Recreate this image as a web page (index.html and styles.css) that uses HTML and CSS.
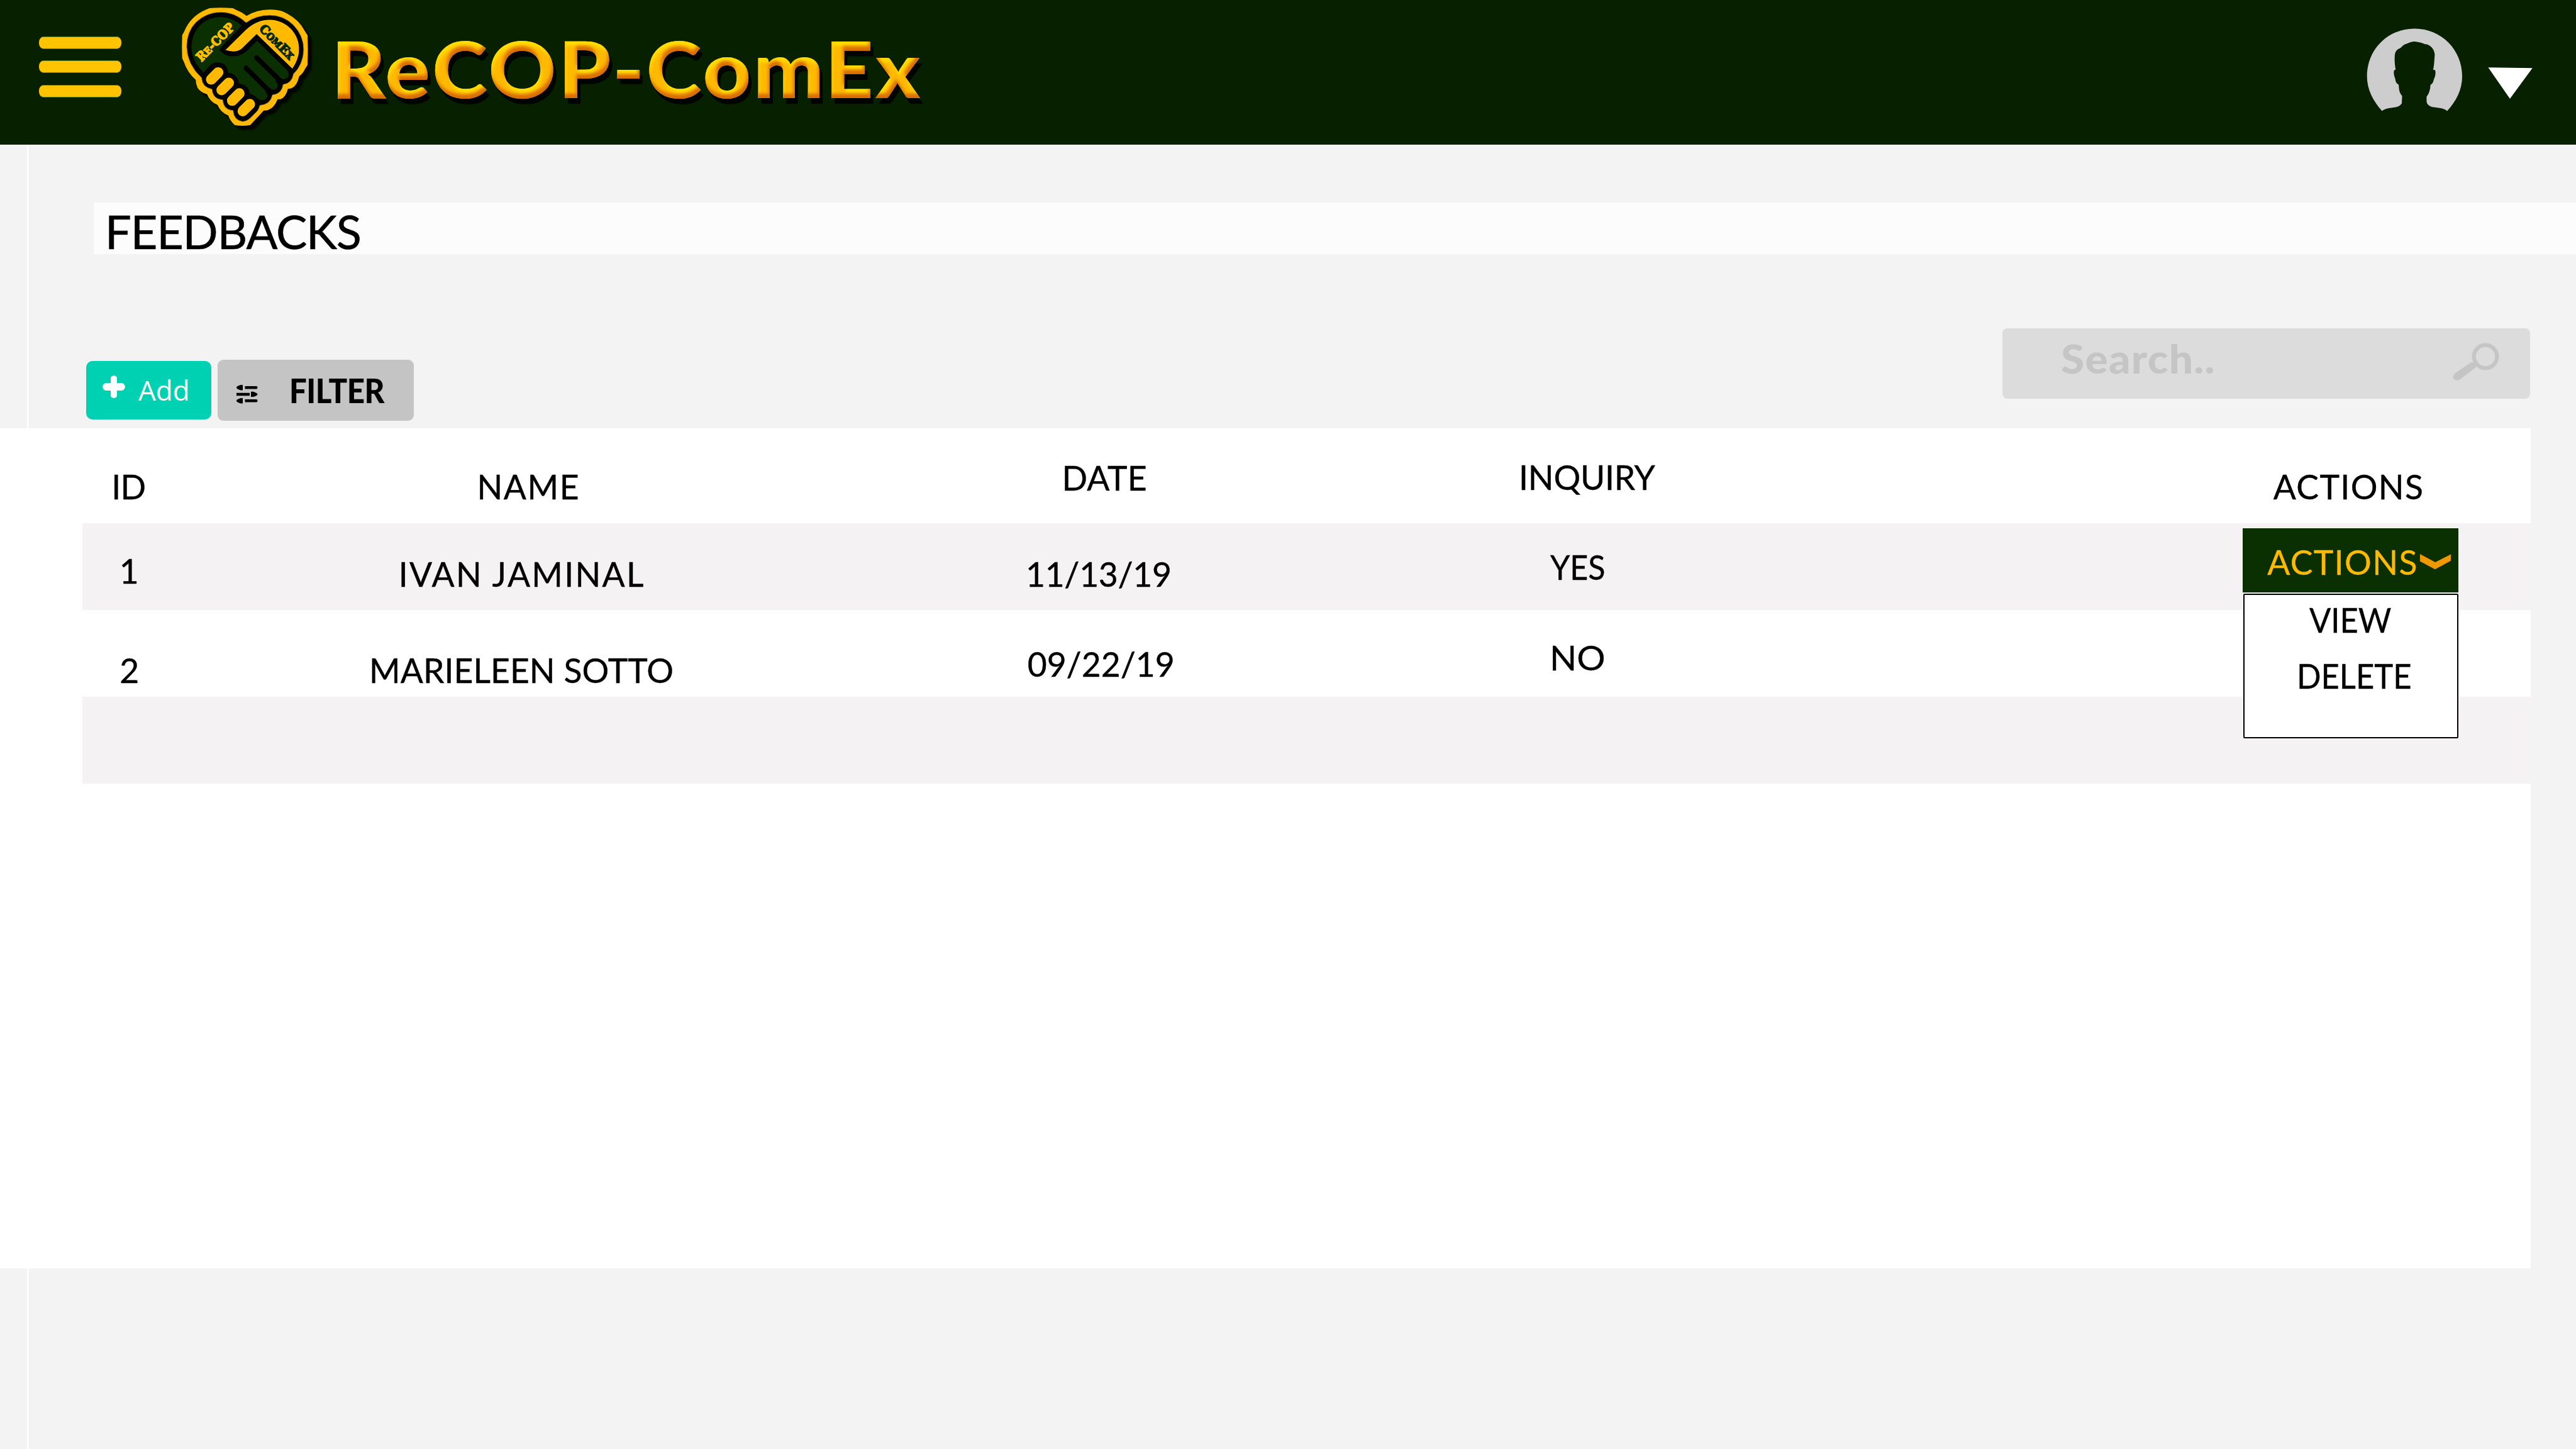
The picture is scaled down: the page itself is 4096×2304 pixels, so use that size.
FILE: index.html
```html
<!DOCTYPE html>
<html lang="en">
<head>
<meta charset="utf-8">
<title>ReCOP-ComEx</title>
<link rel="stylesheet" href="styles.css">
</head>
<body>
<header class="topbar">
  <div class="burger"><span class="bar"></span><span class="bar"></span><span class="bar"></span></div>
  <svg class="logo" viewBox="0 0 1140 1020">
    <defs>
      <filter id="soft" x="-10%" y="-10%" width="125%" height="125%"><feGaussianBlur stdDeviation="8"/></filter>
      <filter id="bevel" x="-5%" y="-10%" width="110%" height="130%" color-interpolation-filters="sRGB">
        <feComponentTransfer in="SourceAlpha" result="inv"><feFuncA type="table" tableValues="1 0"/></feComponentTransfer>
        <feGaussianBlur in="inv" stdDeviation="2.5" result="soft"/>
        <feOffset in="soft" dx="-2" dy="-7" result="low"/>
        <feFlood flood-color="#d96c00"/>
        <feComposite in2="low" operator="in"/>
        <feComposite in2="SourceAlpha" operator="in" result="shade"/>
        <feOffset in="soft" dx="2" dy="7" result="high"/>
        <feFlood flood-color="#ffdc00"/>
        <feComposite in2="high" operator="in"/>
        <feComposite in2="SourceAlpha" operator="in" result="shine"/>
        <feOffset in="SourceAlpha" dx="5" dy="9" result="drop"/>
        <feFlood flood-color="#000400"/>
        <feComposite in2="drop" operator="in" result="cast"/>
        <feMerge><feMergeNode in="cast"/><feMergeNode in="SourceGraphic"/><feMergeNode in="shine"/><feMergeNode in="shade"/></feMerge>
      </filter>
      <path id="shell" d="M300 61Q385 54 475 61L495 72Q540 90 577 118Q655 70 750 71Q820 72 852 88L880 102Q970 150 1010 230L1031 262Q1037 370 1031 485L1012 515Q1000 545 968 570Q955 640 910 659L885 662Q870 725 830 739L808 741Q780 810 730 823L705 824L605 932Q545 943 488 932Q455 900 440 860Q385 840 360 782Q305 760 282 702Q235 690 212 655Q198 625 198 595Q135 540 108 457L97 435Q93 350 97 262L112 235Q160 120 275 72Z"/>
    </defs>
    <use href="#shell" transform="translate(30 30)" fill="#000" filter="url(#soft)" opacity=".9"/>
    <use href="#shell" fill="#ffb900"/>
    <path fill="#000" stroke="#b79545" stroke-width="4" d="M385 90Q490 90 574 168Q650 113 750 113Q850 113 925 185Q1003 265 1003 370Q1000 480 927 552Q915 622 850 630Q840 700 770 708Q755 780 676 786Q670 815 655 830L600 885Q575 905 548 907Q480 895 476 824Q405 820 398 745Q325 740 318 665Q245 650 241 580Q133 480 130 348Q130 235 200 165Q280 90 385 90Z"/>
    <path fill="#0a2f00" d="M385 127Q470 130 541 190L372 370Q415 420 475 420Q535 418 580 378L655 303L880 525Q900 560 880 580Q855 600 822 582L790 600Q820 630 805 655Q780 680 745 655L715 680Q740 705 730 728Q700 760 665 738L642 718Q625 706 602 700Q592 630 520 622Q508 550 440 543Q435 470 362 465Q325 465 300 492L257 541Q165 450 166 350Q170 240 245 175Q305 127 385 127Z"/>
    <path fill="none" stroke="#000" stroke-width="36" stroke-linecap="round" d="M652 430L832 606M573 507L752 684"/>
    <path fill="#ffb900" stroke="#ffc60a" stroke-width="5" d="M424 372L570 228Q650 150 750 150Q840 152 903 215Q967 280 965 375Q963 440 918 507L652 250L545 355Q500 395 424 372Z"/>
    <path fill="none" stroke="#ffc400" stroke-width="78" stroke-linecap="round" d="M365 540L313 592M444 618L391 671M523 697L470 750M601 776L549 828"/>
    <path fill="none" stroke="#ffb900" stroke-width="68" stroke-linecap="round" d="M365 540L313 592M444 618L391 671M523 697L470 750M601 776L549 828"/>
    <text class="badge badge-gold" transform="translate(240 463) rotate(-45)" textLength="358" lengthAdjust="spacingAndGlyphs"><tspan font-size="94">R</tspan><tspan font-size="72">E</tspan><tspan font-size="94">-COP</tspan></text>
    <text class="badge badge-green" transform="translate(666 219) rotate(45)" textLength="326" lengthAdjust="spacingAndGlyphs"><tspan font-size="92">C</tspan><tspan font-size="70">OM</tspan><tspan font-size="92">E</tspan><tspan font-size="70">X</tspan></text>
  </svg>
  <h1 class="brand">ReCOP-ComEx</h1>
  <svg class="account" viewBox="0 0 1568 1020" preserveAspectRatio="none">
    <path fill="#cdcdcd" d="M309 705C250 630 211 545 211 446C211 250 345 91 520 91C695 91 829 250 829 446C829 545 792 630 731 705C715 685 670 681 632 675C608 665 598 650 598 632L598 598C615 575 621 545 623 512L637 497C644 480 645 465 652 450C657 430 657 410 652 400L640 398C648 370 648 320 651 285C648 245 625 210 585 206C560 195 540 190 518 188C490 190 480 203 460 207C440 215 435 235 420 240C400 250 391 270 391 300C389 340 393 370 397 396L387 403C382 425 388 445 394 465C397 480 397 498 417 510C418 540 420 570 439 593L437 648C425 672 405 676 380 680C350 685 325 690 309 705Z"/>
    <path fill="#fff" d="M998 381L1285 385L1139 614Z"/>
  </svg>
</header>
<main class="page">
  <h2 class="heading">FEEDBACKS</h2>
  <div class="toolbar">
    <button class="btn add">
      <svg class="plus" viewBox="0 0 36 36"><path fill="#fff" d="M13 4Q13 1 18 0Q23 1 23 4V12H31Q35 13 36 18Q35 23 31 24H23V32Q23 35 18 36Q13 35 13 32V24H5Q1 23 0 18Q1 13 5 12H13Z"/></svg>
      <span class="add-text">Add</span>
    </button>
    <button class="btn filter">
      <svg class="sliders" viewBox="0 0 34 30"><path d="M13.5 2H31.500Q33.500 2 33.500 4.200T31.500 6.500H13.500ZM10 0V8.500H7Q0 6.500 0 4.200Q0 2 7 0ZM0 12.700H21V17.200H0ZM23 10.700H27Q33.500 13 33.500 15Q33.500 17 27 19H23ZM13.500 23H31.500Q33.500 23 33.500 25.200T31.500 27.500H13.500ZM10 21V29.500H7Q0 27.500 0 25.200Q0 23 7 21Z"/></svg>
      <span class="filter-text">FILTER</span>
    </button>
    <div class="search">
      <span class="search-text">Search..</span>
      <svg class="lens" viewBox="0 0 68 84"><circle cx="46" cy="23" r="18.300" fill="none" stroke="#c5c5c5" stroke-width="6.300"/><path fill="#c5c5c5" d="M23 32L28 33Q31 35 31 40L6 59Q2 62 -2 60Q-7 57 -5 53Q-4 50 0 48Z"/></svg>
    </div>
  </div>
  <section class="panel">
    <div class="row head">
      <span class="cell id-h">ID</span><span class="cell name-h">NAME</span><span class="cell date-h">DATE</span><span class="cell inq-h">INQUIRY</span><span class="cell act-h">ACTIONS</span>
    </div>
    <div class="row tint one">
      <span class="cell id-c">1</span><span class="cell name-c">IVAN JAMINAL</span><span class="cell date-c">11/13/19</span><span class="cell inq-c">YES</span>
      <div class="dropdown">
        <div class="trigger"><span class="trigger-text">ACTIONS</span><svg class="chevron" viewBox="894 528 134 78" preserveAspectRatio="none"><path fill="#f09800" d="M894 528L960 570L1028 529L1027 563L959 606L894 565Z"/></svg></div>
        <div class="menu"><span class="view">VIEW</span><span class="delete">DELETE</span></div>
      </div>
    </div>
    <div class="row two">
      <span class="cell id-c">2</span><span class="cell name-c">MARIELEEN SOTTO</span><span class="cell date-c">09/22/19</span><span class="cell inq-c">NO</span>
    </div>
    <div class="row tint"></div>
  </section>
</main>
</body>
</html>
```
FILE: styles.css
```css
* { box-sizing: border-box; }

body {
  margin: 0;
  width: 4096px;
  height: 2304px;
  overflow: hidden;
  display: flex;
  flex-direction: column;
  background: #f3f3f3;
  color: #000;
  font: 400 53.4px/60px Lato, "Open Sans", sans-serif;
  white-space: nowrap;
}

h1, h2 { margin: 0; }
svg { display: block; overflow: visible; flex: none; }

/* Top bar */
.topbar {
  height: 230.4px;
  flex: none;
  display: flex;
  align-items: flex-start;
  background: #072000;
}
.burger {
  width: 131.4px;
  margin: 57.6px 75.8px 0 61.6px;
  display: flex;
  flex-direction: column;
  gap: 18.8px;
}
.bar {
  height: 20px;
  border-radius: 7px / 9px;
  background: #ffc400;
  border: solid #5d7a1c;
  border-width: 1px 0;
}
.logo { width: 243.2px; height: 217.6px; }
.badge { font-family: "DejaVu Serif", serif; font-weight: 700; stroke-linejoin: round; stroke-width: 7px; }
.badge-gold { fill: #ffbf00; stroke: #ffbf00; }
.badge-green { fill: #04290a; stroke: #04290a; }
.brand {
  margin: 33px 0 0 15px;
  font-size: 124px;
  line-height: 150px;
  font-weight: 900;
  letter-spacing: 3.6px;
  color: #ffb900;
  filter: url(#bevel);
  transform: scaleX(1.07);
  transform-origin: 0 0;
}
.account { width: 384px; height: 217.6px; margin: 25.6px 0 0 auto; }

/* Page */
.page {
  flex: 1;
  padding-top: 92.1px;
  background: linear-gradient(#fff, #fff) 43px 0 / 2.5px 100% no-repeat;
}
.heading {
  height: 82px;
  margin-left: 148.6px;
  padding: 4.500px 0 0 18.5px;
  background: #fcfcfc;
  font-size: 73.9px;
  line-height: 82px;
  font-weight: 400;
  letter-spacing: -1.2px;
  -webkit-text-stroke: .6px;
}
.toolbar {
  height: 276.500px;
  padding-left: 136.9px;
  display: flex;
  align-items: flex-start;
}
.btn {
  display: flex;
  align-items: flex-start;
  padding: 0;
  border: 0;
  color: inherit;
  font: inherit;
}
.add {
  width: 199.4px;
  height: 92.9px;
  margin: 170px 9.4px 0 0;
  border-radius: 10px;
  background: #00d1b2;
  color: #fff;
}
.plus { width: 36px; height: 36px; margin: 22.5px 0 0 26px; }
.add-text {
  margin: 15.7px 0 0 21px;
  font: 400 44px/60px "Open Sans", sans-serif;
}
.filter {
  width: 312px;
  height: 97.1px;
  margin-top: 167.8px;
  border-radius: 9px;
  background: #c4c4c4;
}
.sliders { width: 34px; height: 30px; margin: 40px 0 0 30.500px; }
.filter-text {
  margin: 17.7px 0 0 49.4px;
  font-size: 53.5px;
  font-weight: 900;
  letter-spacing: -.6px;
  transform: scaleX(.92);
  transform-origin: 0 0;
}
.search {
  width: 838.7px;
  height: 111.8px;
  margin: 117.7px 72.9px 0 auto;
  display: flex;
  align-items: flex-start;
  border-radius: 8px;
  background: #dcdcdc;
  color: #c5c5c5;
}
.search-text {
  margin: 7.5px 0 0 92.6px;
  font-size: 62.5px;
  line-height: 80px;
  font-weight: 900;
  letter-spacing: 1.2px;
  transform: scaleX(1.08);
  transform-origin: 0 0;
}
.lens { width: 68px; height: 84px; margin: 22.1px 49.6px 0 auto; }

/* Table */
.panel {
  width: 4023.7px;
  height: 1336.3px;
  padding-left: 130.8px;
  background: #fff;
  -webkit-text-stroke: .4px;
}
.row {
  height: 138px;
  display: grid;
  grid-template-columns: 450px 1019.2px 800px 1140px 1fr;
  align-items: start;
}
.head { height: 151px; }
.tint { background: #f4f2f3; }

.id-h { padding: 62px 0 0 46.500px; letter-spacing: -.7px; }
.name-h { padding: 62px 0 0 177.6px; letter-spacing: 1.6px; }
.date-h { padding: 47.8px 0 0 88.5px; letter-spacing: .3px; }
.inq-h { padding: 47.2px 0 0 15.1px; letter-spacing: -.2px; }
.act-h { padding: 62px 0 0 74.8px; letter-spacing: 1.4px; }

.one .id-c { padding: 44.7px 0 0 59px; }
.one .name-c { padding: 49.9px 0 0 53px; letter-spacing: 2.3px; }
.one .date-c { padding: 49.9px 0 0 31px; letter-spacing: -.3px; }
.one .inq-c { padding: 38.6px 0 0 65px; transform: scaleX(.94); transform-origin: 65px 0; }

.two .id-c { padding: 65.3px 0 0 59.500px; }
.two .name-c { padding: 64.9px 0 0 6.2px; letter-spacing: .1px; }
.two .date-c { padding: 54.8px 0 0 33.7px; }
.two .inq-c { padding: 44.8px 0 0 64px; transform: scaleX(1.06); transform-origin: 64px 0; }

/* The open menu hangs over the rows below */
.one { position: relative; }
.dropdown {
  position: absolute;
  top: 7.6px;
  right: 114.7px;
  width: 343.1px;
  background: #f2f2f2;
}
.trigger {
  height: 102.4px;
  display: flex;
  align-items: flex-start;
  background: #0a2f00;
  color: #ffb900;
}
.trigger-text { width: 237px; margin: 23.2px 0 0 39.3px; letter-spacing: 1.4px; }
.chevron { width: 49.2px; height: 24.2px; margin: 41px 0 0 6.2px; }
.menu {
  height: 229.2px;
  margin: 2.5px 0 0 1.5px;
  padding-top: 9px;
  display: flex;
  flex-direction: column;
  align-items: flex-start;
  gap: 28.7px;
  border: 2px solid #000;
  border-radius: 2px;
  background: #fff;
}
.view, .delete { transform: scaleX(.95); transform-origin: 0 0; }
.view { margin-left: 103px; }
.delete { margin-left: 82.2px; }
```
